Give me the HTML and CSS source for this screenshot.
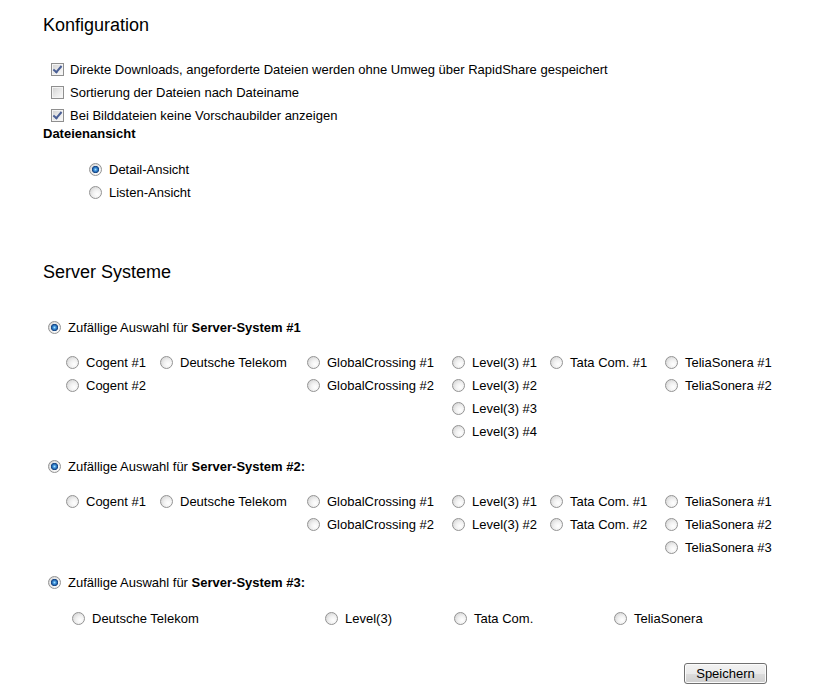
FILE: index.html
```html
<!DOCTYPE html>
<html lang="de">
<head>
<meta charset="utf-8">
<title>Konfiguration</title>
<link rel="stylesheet" href="styles.css">
</head>
<body>
<div class="page">
  <h1 class="title">Konfiguration</h1>

  <div class="checks">
    <label class="opt"><input type="checkbox" class="cb" checked>Direkte Downloads, angeforderte Dateien werden ohne Umweg über RapidShare gespeichert</label>
    <label class="opt"><input type="checkbox" class="cb">Sortierung der Dateien nach Dateiname</label>
    <label class="opt"><input type="checkbox" class="cb" checked>Bei Bilddateien keine Vorschaubilder anzeigen</label>
  </div>

  <div class="subhead">Dateienansicht</div>
  <div class="views">
    <label class="opt"><input type="radio" class="rb" name="view" checked>Detail-Ansicht</label>
    <label class="opt"><input type="radio" class="rb" name="view">Listen-Ansicht</label>
  </div>

  <h2 class="title title-2">Server Systeme</h2>

  <label class="opt group"><input type="radio" class="rb" name="s1" checked>Zufällige Auswahl für&nbsp;<b>Server-System #1</b></label>
  <div class="servers">
    <div class="col"><label class="opt"><input type="radio" class="rb" name="s1">Cogent #1</label><label class="opt"><input type="radio" class="rb" name="s1">Cogent #2</label></div>
    <div class="col"><label class="opt"><input type="radio" class="rb" name="s1">Deutsche Telekom</label></div>
    <div class="col"><label class="opt"><input type="radio" class="rb" name="s1">GlobalCrossing #1</label><label class="opt"><input type="radio" class="rb" name="s1">GlobalCrossing #2</label></div>
    <div class="col"><label class="opt"><input type="radio" class="rb" name="s1">Level(3) #1</label><label class="opt"><input type="radio" class="rb" name="s1">Level(3) #2</label><label class="opt"><input type="radio" class="rb" name="s1">Level(3) #3</label><label class="opt"><input type="radio" class="rb" name="s1">Level(3) #4</label></div>
    <div class="col"><label class="opt"><input type="radio" class="rb" name="s1">Tata Com. #1</label></div>
    <div class="col"><label class="opt"><input type="radio" class="rb" name="s1">TeliaSonera #1</label><label class="opt"><input type="radio" class="rb" name="s1">TeliaSonera #2</label></div>
  </div>

  <label class="opt group"><input type="radio" class="rb" name="s2" checked>Zufällige Auswahl für&nbsp;<b>Server-System #2:</b></label>
  <div class="servers">
    <div class="col"><label class="opt"><input type="radio" class="rb" name="s2">Cogent #1</label></div>
    <div class="col"><label class="opt"><input type="radio" class="rb" name="s2">Deutsche Telekom</label></div>
    <div class="col"><label class="opt"><input type="radio" class="rb" name="s2">GlobalCrossing #1</label><label class="opt"><input type="radio" class="rb" name="s2">GlobalCrossing #2</label></div>
    <div class="col"><label class="opt"><input type="radio" class="rb" name="s2">Level(3) #1</label><label class="opt"><input type="radio" class="rb" name="s2">Level(3) #2</label></div>
    <div class="col"><label class="opt"><input type="radio" class="rb" name="s2">Tata Com. #1</label><label class="opt"><input type="radio" class="rb" name="s2">Tata Com. #2</label></div>
    <div class="col"><label class="opt"><input type="radio" class="rb" name="s2">TeliaSonera #1</label><label class="opt"><input type="radio" class="rb" name="s2">TeliaSonera #2</label><label class="opt"><input type="radio" class="rb" name="s2">TeliaSonera #3</label></div>
  </div>

  <label class="opt group group-3"><input type="radio" class="rb" name="s3" checked>Zufällige Auswahl für&nbsp;<b>Server-System #3:</b></label>
  <div class="servers3">
    <label class="opt"><input type="radio" class="rb" name="s3">Deutsche Telekom</label>
    <label class="opt"><input type="radio" class="rb" name="s3">Level(3)</label>
    <label class="opt"><input type="radio" class="rb" name="s3">Tata Com.</label>
    <label class="opt"><input type="radio" class="rb" name="s3">TeliaSonera</label>
  </div>

  <div class="actions">
    <button type="button" class="btn">Speichern</button>
  </div>
</div>
</body>
</html>
```

FILE: styles.css
```css
html, body {
  margin: 0;
  padding: 0;
  background: #ffffff;
}

body {
  font-family: "Liberation Sans", Arial, sans-serif;
  font-size: 13px;
  color: #000000;
}

.page {
  width: 724px;
  padding-left: 43px;
  padding-top: 14px;
  padding-bottom: 14px;
}

.title {
  margin: 0;
  font-size: 18px;
  font-weight: normal;
  line-height: 22px;
}

.title-2 {
  margin-top: 57px;
}

.opt {
  display: flex;
  align-items: center;
  height: 23px;
  line-height: 23px;
  white-space: nowrap;
}

.opt b {
  font-weight: bold;
}

.checks {
  margin-top: 22px;
  padding-left: 8px;
}

.subhead {
  margin-top: -1px;
  font-weight: bold;
  line-height: 16px;
}

.views {
  margin-top: 16px;
  padding-left: 46px;
}

.group {
  margin-top: 33px;
  padding-left: 5px;
}

.servers + .group {
  margin-top: 12px;
}

.servers + .group-3 {
  margin-top: 12px;
}

.servers {
  margin-top: 12px;
  padding-left: 23px;
  display: grid;
  grid-template-columns: 94px 147px 145px 98px 115px auto;
  align-items: start;
}

.col {
  display: flex;
  flex-direction: column;
}

.servers3 {
  margin-top: 13px;
  padding-left: 29px;
  display: grid;
  grid-template-columns: 253px 129px 160px auto;
}

/* Windows-7 style checkbox */
.cb {
  appearance: none;
  -webkit-appearance: none;
  position: relative;
  box-sizing: border-box;
  width: 13px;
  height: 13px;
  margin: 0 6px 0 0;
  flex: none;
  border: 1px solid #8f8f8f;
  background: linear-gradient(135deg, #cfcfcf 0%, #e6e6e6 45%, #fbfbfb 100%);
  box-shadow: inset 0 0 0 1px #f4f4f4;
}

.cb:checked::before {
  content: "";
  position: absolute;
  left: 3px;
  top: 0px;
  width: 3px;
  height: 7px;
  border-right: 2px solid #4a5f95;
  border-bottom: 2px solid #4a5f95;
  transform: rotate(40deg);
}

/* Windows-7 style radio */
.rb {
  appearance: none;
  -webkit-appearance: none;
  box-sizing: border-box;
  width: 13px;
  height: 13px;
  margin: 0 7px 0 0;
  flex: none;
  border-radius: 50%;
  border: 1px solid #939393;
  background: radial-gradient(circle at 65% 65%, #ffffff 0%, #f1f1f1 40%, #cbcbcb 100%);
}

.rb:checked {
  background:
    radial-gradient(circle at 50% 50%, #a8e4fc 0, #4a9be0 1.3px, #1d5fa8 2.6px, #163f78 3.4px, rgba(255,255,255,0) 3.9px),
    radial-gradient(circle at 65% 65%, #ffffff 0%, #f1f1f1 40%, #cbcbcb 100%);
}

.actions {
  display: flex;
  justify-content: flex-end;
  margin-top: 33px;
}

.btn {
  box-sizing: border-box;
  width: 83px;
  height: 21px;
  padding: 0;
  font-family: "Liberation Sans", Arial, sans-serif;
  font-size: 13px;
  color: #000000;
  line-height: 19px;
  border: 1px solid #707070;
  border-radius: 3px;
  background: linear-gradient(#f2f2f2 0%, #ebebeb 50%, #dddddd 51%, #cfcfcf 100%);
  box-shadow: inset 0 0 0 1px #fbfbfb;
}
```
